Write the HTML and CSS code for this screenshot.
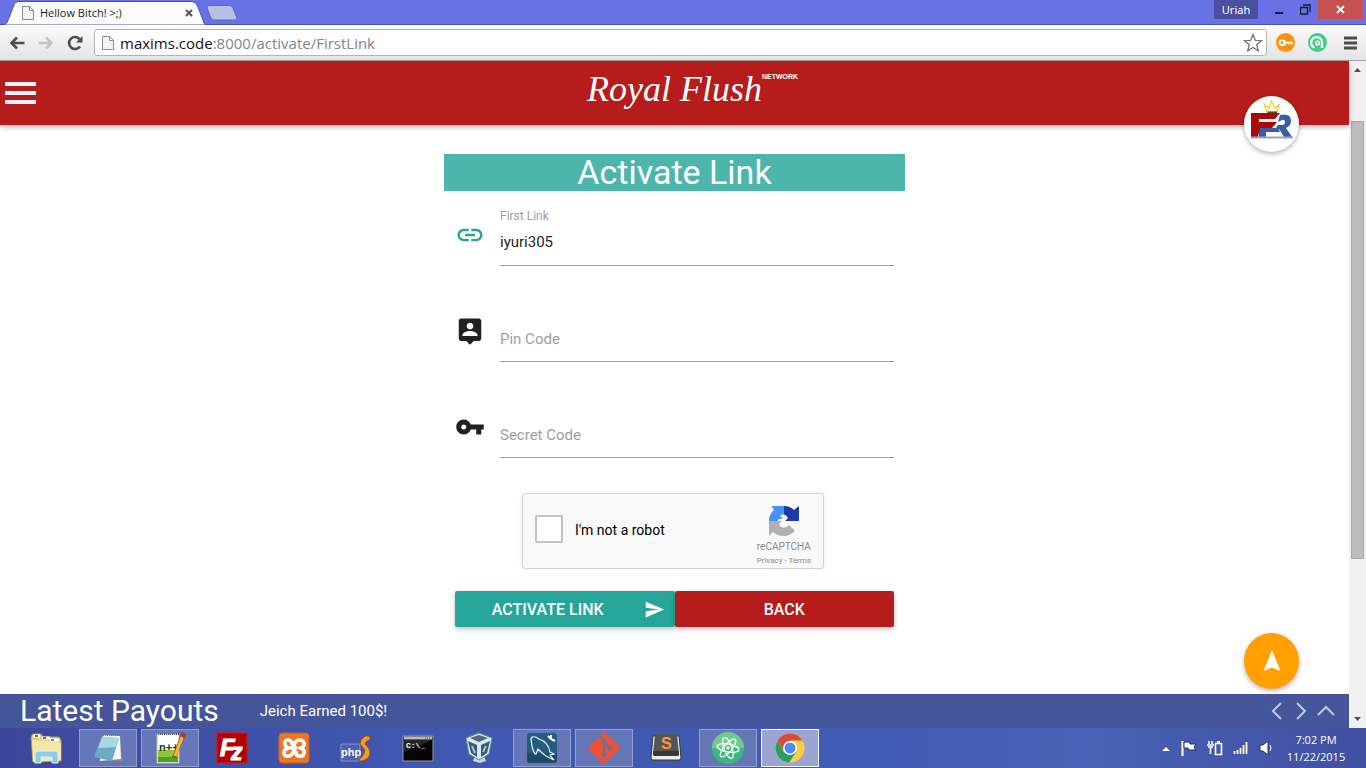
FILE: index.html
```html
<!DOCTYPE html>
<html lang="en">
<head>
<meta charset="utf-8">
<title>Hellow Bitch! &gt;;)</title>
<link rel="stylesheet" href="styles.css">
</head>
<body>
<div class="tabstrip">
  <div class="tab">
    <svg class="tab-shape" viewBox="0 0 208 25" preserveAspectRatio="none" aria-hidden="true"><path d="M0 25C7 25 7 23 9 18L14 5Q15 1.500 19 1.500H193Q197 1.500 199 5L205 20Q206 25 208 25Z" fill="#fbfbfb" stroke="#4d529c"/></svg>
    <svg class="page-icon" viewBox="0 0 12 14" aria-hidden="true"><path d="M.5.500H7.500L11.500 4.500V13.500H.5ZM7.500.500V4.500H11.500" fill="#f4f4f4" stroke="#8b8b8b"/></svg>
    <span class="tab-title">Hellow Bitch! &gt;;)</span>
    <button class="tab-close" aria-label="Close tab"><svg width="8" height="8" viewBox="0 0 8 8"><path d="M1 1L7 7M7 1L1 7" stroke="#555" stroke-width="2"/></svg></button>
  </div>
  <button class="new-tab" aria-label="New tab"><svg width="32" height="16" viewBox="0 0 32 16"><path d="M3 .5H23Q26 .5 27 3L31 13Q31 15 29 15H8Q6 15 5 13L1 3Q.5 .5 3 .5Z" fill="#b9c1e3" stroke="#5d66c5"/></svg></button>
  <div class="window-controls">
    <span class="profile">Uriah</span>
    <button class="win-btn" aria-label="Minimize"><svg width="10" height="12" viewBox="0 0 10 12"><path d="M1 9H9" stroke="#1c1c1c" stroke-width="2"/></svg></button>
    <button class="win-btn" aria-label="Restore"><svg width="11" height="11" viewBox="0 0 11 11"><path d="M3 1H10V8M.5 3.500H7.500V10H.5Z" fill="none" stroke="#1c1c1c" stroke-width="1.300"/></svg></button>
    <button class="win-close" aria-label="Close"><svg width="9" height="9" viewBox="0 0 9 9"><path d="M1 1L8 8M8 1L1 8" stroke="#fff" stroke-width="1.800"/></svg></button>
  </div>
</div>
<div class="toolbar">
  <button class="nav-btn" aria-label="Back"><svg width="16" height="14" viewBox="0 0 16 14"><path d="M15.500 7H2.500M8 1.500L2.500 7L8 12.500" fill="none" stroke="#4e4e4e" stroke-width="2.600"/></svg></button>
  <button class="nav-btn" aria-label="Forward"><svg width="16" height="14" viewBox="0 0 16 14"><path d="M.5 7H13.500M8 1.500L13.500 7L8 12.500" fill="none" stroke="#c5c5c5" stroke-width="2.600"/></svg></button>
  <button class="nav-btn" aria-label="Reload"><svg width="16" height="16" viewBox="0 0 16 16"><path d="M13 11.500A6 6 0 1 1 12.500 4" fill="none" stroke="#4e4e4e" stroke-width="2.600"/><path d="M15.500 1V7.500H9Z" fill="#4e4e4e"/></svg></button>
  <div class="omnibox">
    <svg class="page-icon" viewBox="0 0 12 14" aria-hidden="true"><path d="M.5.500H7.500L11.500 4.500V13.500H.5ZM7.500.500V4.500H11.500" fill="#f4f4f4" stroke="#8b8b8b"/></svg>
    <span class="url"><span class="host">maxims.code</span>:8000/activate/FirstLink</span>
    <button class="star" aria-label="Bookmark"><svg width="20" height="20" viewBox="0 0 20 20"><path d="M10 1.500L12.300 7.300L18.500 7.700L13.700 11.700L15.300 17.800L10 14.400L4.700 17.800L6.300 11.700L1.500 7.700L7.700 7.300Z" fill="#fff" stroke="#757575" stroke-width="1.300"/></svg></button>
  </div>
  <button class="ext" aria-label="Password extension"><svg width="19" height="19" viewBox="0 0 19 19"><circle cx="9.500" cy="9.500" r="9.500" fill="#ff9109"/><circle cx="6" cy="9.800" r="2.400" fill="none" stroke="#fff" stroke-width="1.900"/><path d="M8.500 7V13M9 9.700H17M13.500 10V11.500M16 10V11.500" stroke="#fff" stroke-width="1.700"/></svg></button>
  <button class="ext" aria-label="Security extension"><svg width="19" height="19" viewBox="0 0 19 19"><circle cx="9.500" cy="9.500" r="9.500" fill="#41cd85"/><path d="M6.500 14.500A5.400 5.400 0 1 1 14 9.500V15" fill="none" stroke="#fff" stroke-width="2.400"/><circle cx="9.500" cy="10" r="1.800" fill="none" stroke="#fff" stroke-width="1.500"/></svg></button>
  <button class="menu-btn" aria-label="Menu"><svg width="13" height="14" viewBox="0 0 13 14"><path d="M0 2H13M0 7H13M0 12H13" stroke="#4c4c4c" stroke-width="3"/></svg></button>
</div>

<div class="viewport">
  <div class="page">
    <header class="site-header">
      <button class="hamburger" aria-label="Open navigation"><svg width="31" height="22" viewBox="0 0 31 22"><path d="M0 2H31M0 11H31M0 20H31" stroke="#eef1ff" stroke-width="4"/></svg></button>
      <a class="brand" href="#"><span class="brand-name">Royal Flush</span><span class="brand-sub">NETWORK</span></a>
    </header>
    <a class="fab fab-logo" href="#" aria-label="Home">
      <svg width="42" height="40" viewBox="0 0 42 40"><path d="M16 12L13.500 4.500L18 8.500L20.500 1L24 8.500L28.500 4L26 12Z" fill="#fffbe0" stroke="#f2ce35" stroke-width="1.200"/><path d="M16.500 12.500H26" stroke="#5b4a12" stroke-width="2"/><path d="M29 15Q40 13 40 21Q40 26 35 28L41 37H33L28 29H24L27 25H31Q34 25 34 22Q34 19 31 20L27 22Z" fill="#3b5da5"/><path d="M8 28H27L29 32H15V37H8Z" fill="#3b5da5"/><path d="M0 13H29L24 19H8V22H26L21 28H9L7 37H0Z" fill="#a9090c"/><path d="M0 37.500H42" stroke="#96a1c7" stroke-width="2"/></svg>
    </a>
    <main class="content">
      <form class="card">
        <h1 class="title">Activate Link</h1>
        <div class="form-body">
          <div class="field">
            <svg class="field-icon" viewBox="0 0 24 24" fill="#26a69a" aria-hidden="true"><path d="M3.900 12c0-1.710 1.390-3.100 3.100-3.100h4V7H7c-2.760 0-5 2.240-5 5s2.240 5 5 5h4v-1.900H7c-1.710 0-3.100-1.390-3.100-3.100zM8 13h8v-2H8v2zm9-6h-4v1.900h4c1.710 0 3.100 1.390 3.100 3.100s-1.390 3.100-3.100 3.100h-4V17h4c2.760 0 5-2.240 5-5s-2.240-5-5-5z"/></svg>
            <div class="control"><label class="raised" for="link">First Link</label><input id="link" type="text" value="iyuri305"></div>
          </div>
          <div class="field">
            <svg class="field-icon" viewBox="0 0 24 24" fill="#212121" aria-hidden="true"><path d="M19 2H5c-1.110 0-2 .9-2 2v14c0 1.100.89 2 2 2h4l3 3 3-3h4c1.100 0 2-.9 2-2V4c0-1.100-.9-2-2-2zm-7 3.300c1.490 0 2.700 1.210 2.700 2.700 0 1.490-1.210 2.700-2.700 2.700-1.490 0-2.700-1.210-2.700-2.700 0-1.490 1.210-2.700 2.700-2.700zM18 16H6v-.9c0-2 4-3.100 6-3.100s6 1.100 6 3.100v.9z"/></svg>
            <div class="control"><label for="pin">Pin Code</label><input id="pin" type="text"></div>
          </div>
          <div class="field">
            <svg class="field-icon" viewBox="0 0 24 24" fill="#212121" aria-hidden="true"><path d="M12.650 10C11.830 7.670 9.610 6 7 6c-3.310 0-6 2.690-6 6s2.690 6 6 6c2.610 0 4.830-1.670 5.650-4H17v4h4v-4h2v-4H12.650zM7 14c-1.100 0-2-.9-2-2s.9-2 2-2 2 .9 2 2-.9 2-2 2z"/></svg>
            <div class="control"><label for="secret">Secret Code</label><input id="secret" type="text"></div>
          </div>
        </div>
        <div class="captcha">
          <input class="captcha-box" id="robot" type="checkbox">
          <label class="captcha-label" for="robot">I'm not a robot</label>
          <div class="captcha-brand">
            <svg width="32" height="32" viewBox="0 0 32 32" aria-hidden="true"><path d="M16 1V9.500Q13.500 9 12 10.500L15 13.500L11 14L9.500 16H1Q1 9 6 5L3.500 1Z" fill="#4a90f4"/><path d="M16 1Q22 1 26 5L31 1V16H17L20 13Q19 10 16 9.500Z" fill="#1c3aa9"/><path d="M1 16H14L11 19Q12 22.500 16 22.500Q19 22.500 21 20L27 26Q22 31 16 31Q9 31 5 27L1 31Z" fill="#b0b0b0"/></svg>
            <span class="captcha-name">reCAPTCHA</span>
            <span class="captcha-links"><a href="#">Privacy</a> - <a href="#">Terms</a></span>
          </div>
        </div>
        <div class="actions">
          <button class="btn btn-submit" type="button"><span>Activate Link</span><svg width="21" height="21" viewBox="0 0 24 24" fill="#fff" aria-hidden="true"><path d="M2.010 21L23 12 2.010 3 2 10l15 2-15 2z"/></svg></button>
          <button class="btn btn-back" type="button">Back</button>
        </div>
      </form>
    </main>
    <button class="fab fab-top" aria-label="Back to top"><svg width="26" height="26" viewBox="0 0 24 24" fill="#fff"><path d="M12 2L4.500 20.290l.71.710L12 18l6.790 3 .71-.71z"/></svg></button>
    <footer class="payouts">
      <h2 class="payouts-title">Latest Payouts</h2>
      <span class="payouts-item">Jeich Earned 100$!</span>
      <div class="payouts-nav">
        <button aria-label="Previous"><svg width="18" height="18" viewBox="0 0 18 18"><path d="M14 1L6 9L14 17"/></svg></button>
        <button aria-label="Next"><svg width="18" height="18" viewBox="0 0 18 18"><path d="M5 1L13 9L5 17"/></svg></button>
        <button aria-label="Expand"><svg width="18" height="18" viewBox="0 0 18 18"><path d="M1 13L9 5L17 13"/></svg></button>
      </div>
    </footer>
  </div>
  <div class="scrollbar" aria-hidden="true">
    <svg width="7" height="4" viewBox="0 0 7 4"><path d="M0 4L3.500 0L7 4Z" fill="#505050"/></svg>
    <div class="track"><div class="thumb"></div></div>
    <svg width="7" height="4" viewBox="0 0 7 4"><path d="M0 0L3.500 4L7 0Z" fill="#505050"/></svg>
  </div>
</div>

<div class="taskbar">
  <div class="apps">
    <button class="app" aria-label="File Explorer"><svg viewBox="0 0 32 32"><path d="M1 5L3 2H11L13 5H29L31 8V29L3 30Z" fill="#e9cf7c" stroke="#b99b4c"/><path d="M3 4H10M12 6H20M20 8H29" stroke="#fff" stroke-width="3"/><path d="M5 4H8" stroke="#25a244" stroke-width="2"/><path d="M13 6H16" stroke="#d2442f" stroke-width="2"/><path d="M21 8H24" stroke="#3999d5" stroke-width="2"/><path d="M2 8L18 9L31 11V28L3 30Z" fill="#f7e7a4"/><path d="M5 31V22Q5 19 8 19H25Q28 19 28 22V31H22V25H11V31Z" fill="#8ccbed" stroke="#d9f2fc"/></svg></button>
    <button class="app open" aria-label="Notepad"><svg viewBox="0 0 32 32"><path d="M11 4L28 7L30 29L10 28Z" fill="#a58a5b"/><path d="M11 3L28 4L29 27L8 29Z" fill="#f1f7f7"/><path d="M10 5L27 6L20 29L2 25Z" fill="#69adc2"/><path d="M10 5L27 6L24 15L6 16Z" fill="#a5d9e5"/><path d="M11 3H28" stroke="#777" stroke-width="2" stroke-dasharray="1 1"/></svg></button>
    <button class="app open" aria-label="Notepad++"><svg viewBox="0 0 32 32"><path d="M3 2H25V31H3Z" fill="#fff" stroke="#b5bca8"/><path d="M4 18H24V30H4Z" fill="#8bc63d"/><path d="M4 25H24V30H4Z" fill="#4aa51c"/><path d="M4 2H25" stroke="#555" stroke-width="2" stroke-dasharray="1 1"/><text x="5" y="19" font-family="Liberation Sans" font-size="11" font-weight="700" fill="#173c0f">n++</text><path d="M29 2L20 26" stroke="#8a5c12" stroke-width="4"/><path d="M29 3L21 24" stroke="#f7b933" stroke-width="3"/><path d="M30 1L28 5" stroke="#b5332d" stroke-width="5"/></svg></button>
    <button class="app" aria-label="FileZilla"><svg viewBox="0 0 32 32"><path d="M1 1H31V31H1Z" fill="#b30000" stroke="#cf1717" stroke-width="2" stroke-dasharray="2 1"/><g fill="#fff" stroke="#fff" font-family="Liberation Sans" font-weight="700" font-style="italic"><text x="4" y="24" font-size="24">F</text><text x="15" y="28" font-size="23">z</text></g></svg></button>
    <button class="app" aria-label="XAMPP"><svg viewBox="0 0 32 32"><rect x="1" y="1" width="30" height="30" rx="3" fill="#ed7625" stroke="#b8662e"/><path d="M14 12Q14 8 10 8Q6 8 7 12Q8 16 11 16Q6 17 6 21Q7 25 11 24Q15 23 16 18V14Q17 8 22 8Q27 9 26 13Q25 16 22 16Q27 17 26 21Q25 25 21 24Q18 24 18 20M13 16H18" fill="none" stroke="#fff" stroke-width="3.600" stroke-linecap="round" stroke-linejoin="round"/></svg></button>
    <button class="app" aria-label="phpStorm"><svg viewBox="0 0 32 32"><path d="M1 12H20V29H1Z" fill="#4f5eae" stroke="#8292cf"/><text x="1" y="24" font-family="Liberation Sans" font-size="11" font-weight="700" fill="#fff">php</text><path d="M30 4H25Q20 7 20 12L25 18Q24 24 18 29H23Q31 26 30 19Q28 14 25 12Q25 9 30 8Z" fill="#f79a24" stroke="#8b4e16"/></svg></button>
    <button class="app" aria-label="Command Prompt"><svg viewBox="0 0 32 32"><path d="M1 4H31V29H1Z" fill="#050505" stroke="#999"/><path d="M2 6H30" stroke="#bbb" stroke-width="3"/><path d="M23 6H29" stroke="#555" stroke-dasharray="1 1"/><path d="M2 8H30L2 20Z" fill="#262626"/><text x="4" y="16" font-family="Liberation Mono" font-size="8" font-weight="700" fill="#fff">C:\_</text></svg></button>
    <button class="app" aria-label="VirtualBox"><svg viewBox="0 0 32 32"><path d="M11 24H20L22 29L16 31L9 29Z" fill="#c9d4dc"/><path d="M2 6L15 1L28 6L25 22L15 28L5 22Z" fill="#dbe7ef" stroke="#718896"/><path d="M6 6L15 3L24 6L15 10Z" fill="#4f6879"/><path d="M4 9L13 13V25L7 21ZM17 13L26 9L23 21L17 25Z" fill="#315d7d"/><path d="M8 14L11 21M19 20L22 14" stroke="#9cc5dd" stroke-width="2"/></svg></button>
    <button class="app open" aria-label="MySQL Workbench"><svg viewBox="0 0 32 32"><rect x="1" y="1" width="30" height="30" rx="3" fill="#255d7f"/><path d="M1 21H31V28Q31 31 28 31H4Q1 31 1 28Z" fill="#1d4965"/><path d="M9 22C5 16 6 11 5 7C5 4 9 4 13 7C19 9 23 14 24 20L28 22L24 23L28 28L20 24L15 20L12 17L10 22Z" fill="none" stroke="#e9f4f9" stroke-width="1.200"/><path d="M22 4L25 7L29 9M25 3V7" fill="none" stroke="#fff" stroke-width="2"/></svg></button>
    <button class="app open" aria-label="Git"><svg viewBox="0 0 32 32"><path d="M16 1L31 16L16 31L1 16Z" fill="#f05133" stroke="#f05133" stroke-width="2" stroke-linejoin="round"/><path d="M11 4L16 9V23M16 10L22 16" stroke="#62739f" stroke-width="2" fill="none"/><g fill="#62739f"><circle cx="16" cy="10" r="2.500"/><circle cx="16" cy="23" r="2.500"/><circle cx="22" cy="16" r="2.500"/></g></svg></button>
    <button class="app" aria-label="Sublime Text"><svg viewBox="0 0 32 32"><path d="M3 4H29L31 26Q31 28 29 28H3Q1 28 1 26Z" fill="#eee" stroke="#333"/><path d="M5 2H27L29 22Q29 24 27 24H5Q3 24 3 22Z" fill="#555"/><path d="M3 19H29V22Q29 24 27 24H5Q3 24 3 22Z" fill="#373737"/><text x="11" y="17" font-family="Liberation Sans" font-size="16" font-weight="700" fill="#ff9a36">S</text></svg></button>
    <button class="app open" aria-label="Atom"><svg viewBox="0 0 32 32"><circle cx="16" cy="16" r="16" fill="#38b978"/><path d="M0 16A16 16 0 0 1 32 16Z" fill="#70c990"/><g fill="none" stroke="#fff" stroke-width="1.300"><ellipse cx="16" cy="16" rx="11" ry="4" transform="rotate(10 16 16)"/><ellipse cx="16" cy="16" rx="11" ry="4" transform="rotate(70 16 16)"/><ellipse cx="16" cy="16" rx="11" ry="4" transform="rotate(130 16 16)"/></g><circle cx="16" cy="16" r="1.600" fill="#fff"/></svg></button>
    <button class="app active" aria-label="Chrome"><svg viewBox="0 0 32 32"><circle cx="16" cy="16" r="14.500" fill="#fbcd45"/><path d="M16 8.500H28.400A14.500 14.500 0 0 0 3.500 8.700L9.500 19Z" fill="#da493a"/><path d="M3.500 8.700A14.500 14.500 0 0 0 15 30.500L22.500 19.700L16 22.500L9.500 19.500Z" fill="#23a163"/><circle cx="16" cy="16" r="7" fill="#fff"/><circle cx="16" cy="16" r="5.500" fill="#4b8cf5"/></svg></button>
  </div>
  <div class="tray">
    <svg width="8" height="12" viewBox="0 0 8 12"><path d="M0 9L4 5L8 9Z" fill="#fff"/></svg>
    <svg width="18" height="18" viewBox="0 0 18 18"><path d="M2.500 2V17" stroke="#fff" stroke-width="2"/><path d="M4 3H9L10 5H16L14 8L16 11H9L8 9H4Z" fill="#fff" stroke="#26305f"/></svg>
    <svg width="18" height="18" viewBox="0 0 18 18"><path d="M3 2V5M6 2V5M1 6H8M2 8H7M4.500 8V15" stroke="#fff" stroke-width="1.600"/><path d="M9.500 4.500H15.500V15.500H9.500Z" fill="none" stroke="#fff" stroke-width="1.600"/><path d="M11 3H14" stroke="#fff" stroke-width="2"/></svg>
    <svg width="18" height="18" viewBox="0 0 18 18"><path d="M2.500 12V15M5.500 11V15M8.500 9V15M11.500 6V15M14.500 3V15" stroke="#26305f" stroke-width="3"/><path d="M2.500 12V15M5.500 11V15M8.500 9V15M11.500 6V15M14.500 3V15" stroke="#fff" stroke-width="2"/></svg>
    <svg width="18" height="18" viewBox="0 0 18 18"><path d="M2 6H5L10 2V16L5 12H2Z" fill="#fff" stroke="#26305f"/><path d="M12 6Q14 9 12 12" fill="none" stroke="#fff"/></svg>
    <div class="clock"><time>7:02 PM</time><time>11/22/2015</time></div>
  </div>
</div>
</body>
</html>
```
FILE: styles.css
```css
* { box-sizing: border-box; }
body {
  margin: 0;
  min-height: 100vh;
  display: flex;
  flex-direction: column;
  background: #fff;
  font-family: Roboto, "Open Sans", sans-serif;
}
button { border: 0; padding: 0; background: none; font: inherit; color: inherit; }
a { color: inherit; text-decoration: none; }
svg { display: block; flex: none; }

.tabstrip {
  height: 25px;
  display: flex;
  align-items: flex-start;
  background: #6871e6;
  border-bottom: 1px solid #4d529c;
}
.tab {
  position: relative;
  width: 206px;
  height: 25px;
  padding: 0 13px 0 22px;
  display: flex;
  align-items: center;
  gap: 6px;
}
.tab-shape { position: absolute; inset: 0; width: 100%; height: 100%; }
.page-icon { position: relative; width: 12px; height: 14px; }
.tab-title { position: relative; flex: 1; color: #222; font: 11px/24px "Open Sans", sans-serif; }
.tab-close { position: relative; }
.new-tab { margin-top: 5px; }
.window-controls { margin-left: auto; display: flex; align-items: flex-start; }
.profile { width: 44px; margin-right: 8px; background: #4a4f9f; color: #fff; text-align: center; font: 11px/19px "Noto Sans", sans-serif; }
.win-btn { width: 26px; height: 19px; display: grid; place-items: center; }
.win-close { width: 45px; height: 19px; margin-right: 3px; display: grid; place-items: center; background: #c75050; }

.toolbar {
  height: 36px;
  padding: 0 8px;
  display: flex;
  align-items: center;
  background: linear-gradient(#fbfbfb, #e4e4e4);
  border-bottom: 1px solid #a6a6a6;
}
.nav-btn { width: 29px; height: 20px; padding-left: 1px; display: flex; align-items: center; }
.omnibox {
  flex: 1;
  height: 27px;
  margin: 0 9px 0 -1px;
  padding: 0 3px 0 7px;
  display: flex;
  align-items: center;
  gap: 6px;
  background: #fff;
  border: 1px solid #b4b4b4;
  border-radius: 3px;
}
.url { flex: 1; color: #858585; font: 15px/22px "Open Sans", sans-serif; }
.host { color: #111; }
.ext { margin-right: 13px; }
.menu-btn { margin: 0 1px 0 4px; }

.viewport { flex: 1; display: flex; }
.page { position: relative; flex: 1; display: flex; flex-direction: column; }
.site-header {
  position: relative;
  height: 64px;
  display: flex;
  justify-content: center;
  background: #b71c1c;
  box-shadow: 0 2px 5px rgba(0, 0, 0, .3);
}
.hamburger { position: absolute; left: 5px; top: 21px; }
.brand { display: flex; align-items: flex-start; margin-left: 36px; color: #fff; }
.brand-name { font: italic 36px/56px "Liberation Serif", serif; }
.brand-sub { padding-top: 11px; font: bold 7px/10px "Liberation Sans Narrow", "Liberation Sans", sans-serif; }

.fab {
  position: absolute;
  right: 50px;
  width: 55px;
  height: 56px;
  display: grid;
  place-items: center;
  border-radius: 50%;
  box-shadow: 0 2px 5px rgba(0, 0, 0, .3);
}
.fab-logo { top: 35px; background: #fff; padding-bottom: 8px; }
.fab-top { bottom: 39px; background: #ffa000; }

.content { flex: 1; padding: 29px 16px; display: flex; justify-content: center; align-items: flex-start; }
.card { flex: 0 1 461px; }
.title { margin: 0; background: #4db6ac; color: #fff; text-align: center; font-size: 34px; font-weight: 400; line-height: 37px; }
.form-body { padding: 11px 11px 0; display: grid; gap: 32px; }
.field { display: flex; height: 64px; }
.field-icon { width: 30px; height: 30px; margin: 18px 15px 0 0; }
.control { flex: 1; display: grid; }
.control label, .control input { grid-area: 1 / 1; }
.control label { z-index: 1; padding-top: 31px; font-size: 15px; line-height: 20px; color: #9e9e9e; pointer-events: none; }
.control .raised { padding-top: 6px; font-size: 12px; line-height: 16px; }
.control input {
  min-width: 0;
  padding: 16px 0 0;
  border: 0;
  border-bottom: 1px solid #9e9e9e;
  background: transparent;
  color: #262626;
  font: 15px/20px Roboto, sans-serif;
}

.captcha {
  width: 302px;
  height: 76px;
  margin: 35px auto 0 78px;
  padding: 0 12px;
  display: flex;
  align-items: center;
  background: #f9f9f9;
  border: 1px solid #d3d3d3;
  border-radius: 3px;
  box-shadow: 0 0 4px rgba(0, 0, 0, .08);
}
.captcha-box { appearance: none; width: 28px; height: 28px; margin: 0 12px 4px 0; background: #fff; border: 2px solid #c1c1c1; border-radius: 2px; }
.captcha-label { flex: 1; padding-bottom: 2px; font-size: 14px; color: #000; }
.captcha-brand { display: flex; flex-direction: column; align-items: center; padding-top: 10px; color: #8a8a8a; }
.captcha-name { margin-top: 3px; font-size: 10px; line-height: 14px; }
.captcha-links { font-size: 8px; line-height: 14px; }

.actions { margin: 22px 11px 0; display: grid; grid-template-columns: 1fr 1fr; }
.btn {
  height: 36px;
  color: #fff;
  border-radius: 2px;
  font-size: 16px;
  font-weight: 500;
  text-transform: uppercase;
  box-shadow: 0 2px 5px rgba(0, 0, 0, .25);
}
.btn-submit { padding: 0 10px 0 0; display: flex; align-items: center; background: #26a69a; }
.btn-submit span { flex: 1; padding-right: 3px; }
.btn-back { background: #b71c1c; }

.payouts { height: 34px; padding: 0 14px 0 20px; display: flex; align-items: center; background: #455599; color: #fff; }
.payouts-title { margin: 0; font-size: 30px; font-weight: 400; line-height: 34px; }
.payouts-item { margin-left: 41px; font-size: 15px; }
.payouts-nav { margin-left: auto; display: flex; gap: 7px; }
.payouts-nav path { fill: none; stroke: #c3c9e1; stroke-width: 2; }

.scrollbar { width: 17px; padding: 7px 0; display: flex; flex-direction: column; align-items: center; background: #f1f1f1; }
.track { flex: 1; width: 13px; padding: 49px 0 158px; display: flex; }
.thumb { flex: 1; background: #bcbcbc; border: 1px solid #a8a8a8; }

.taskbar {
  height: 40px;
  padding-left: 17px;
  display: flex;
  align-items: center;
  background: linear-gradient(90deg, #3c479b, #4057b0 30%, #405cb3 62%, #4961b5 80%, #414fa1);
}
.apps { display: flex; gap: 4px; }
.app { width: 58px; height: 38px; display: grid; place-items: center; border: 1px solid transparent; }
.app svg { width: 32px; height: 32px; }
.app.open { background: #6677b7; border-color: #939fce; }
.app.active { background: #9ba5d2; border-color: #f4f6ff; }
.tray { margin-left: auto; display: flex; align-items: center; gap: 8px; padding-right: 20px; color: #fff; }
.tray svg:first-child { margin-right: 2px; }
.clock { width: 60px; margin-left: 2px; display: flex; flex-direction: column; align-items: center; font: 11px/17px "Open Sans", sans-serif; }
```
